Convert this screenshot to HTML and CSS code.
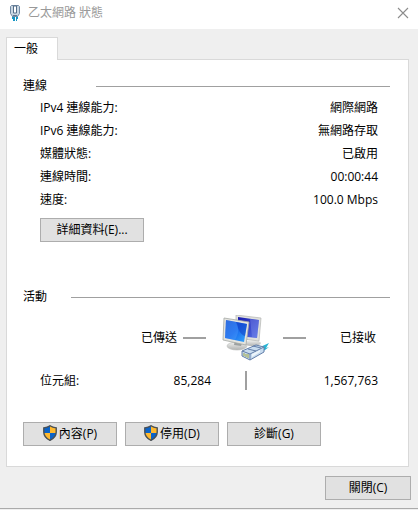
FILE: index.html
```
<!DOCTYPE html>
<html lang="zh-TW">
<head>
    <meta charset="UTF-8">
    <meta name="viewport" content="width=device-width, initial-scale=1.0">
    <title>乙太網路 狀態</title>
    <link rel="stylesheet" href="styles.css">
</head>
<body>
    <!-- Shared shield icon -->
    <svg class="symbols" aria-hidden="true">
        <symbol id="shield" viewBox="0 0 14 16">
            <path d="M7 .5C5 2 3 2.5.7 2.7V7c0 4 2.6 6.800 6.300 8.500Z" fill="#0b63c8"/>
            <path d="M7 .5C9 2 11 2.500 13.300 2.700V7c0 4-2.600 6.800-6.300 8.500Z" fill="#0b63c8"/>
            <path d="M7 .5C9 2 11 2.500 13.300 2.700V8H7Z" fill="#ffb92e"/>
            <path d="M.8 8H7v7.500C3.400 13.800 1.200 11.500.8 8Z" fill="#ffb92e"/>
            <path d="M7 .8C5 2.200 3 2.700.8 2.900V7c0 4 2.500 6.600 6.200 8.300 3.700-1.700 6.200-4.300 6.200-8.300V2.900C11 2.700 9 2.200 7 .8Z" fill="none" stroke="#4b5054" stroke-width="1.400"/>
        </symbol>
    </svg>

    <main class="dialog">
        <header class="titlebar">
            <svg class="plug-icon" viewBox="0 0 12 18" aria-hidden="true">
                <path d="M3 12h3v5H4v-2H3zM7 12h2v3H8v2H7z" fill="#1696c4"/>
                <path d="M2.500 1.500h7l1 1v7l-2 3h-5l-2-3v-7Z" fill="#c9d6e2" stroke="#7189a3"/>
                <path d="M4.500 2v7h3V2Z" fill="#fff" stroke="#566f89"/>
                <path d="M4 11.500h4" stroke="#5f7790"/>
            </svg>
            <h1>乙太網路 狀態</h1>
            <button class="close-icon" type="button" aria-label="關閉視窗">
                <svg viewBox="0 0 12 12" aria-hidden="true"><path d="M1 1l10 10M11 1L1 11" stroke="#8c8c8c" stroke-width="1.100"/></svg>
            </button>
        </header>

        <div class="content">
            <div class="tabs" role="tablist">
                <button class="tab" type="button" role="tab" aria-selected="true">一般</button>
            </div>

            <div class="panel" role="tabpanel">
                <!-- Connection -->
                <section class="connection">
                    <h2 class="connection-title">連線</h2>
                    <dl class="details">
                        <div class="row"><dt>IPv4 連線能力:</dt><dd>網際網路</dd></div>
                        <div class="row"><dt>IPv6 連線能力:</dt><dd>無網路存取</dd></div>
                        <div class="row"><dt>媒體狀態:</dt><dd>已啟用</dd></div>
                        <div class="row"><dt>連線時間:</dt><dd>00:00:44</dd></div>
                        <div class="row"><dt>速度:</dt><dd>100.0 Mbps</dd></div>
                    </dl>
                    <button class="btn btn-details" type="button">詳細資料(E)...</button>
                </section>

                <!-- Activity -->
                <section class="activity">
                    <h2 class="activity-title">活動</h2>
                    <div class="traffic">
                        <div class="sent">已傳送<span class="dash"></span></div>
                        <svg class="network-icon" viewBox="0 0 48 46" aria-hidden="true">
                            <defs>
                                <linearGradient id="screen" x1="0" y1="0" x2="1" y2="1">
                                    <stop offset="0" stop-color="#1a4fd0"/>
                                    <stop offset=".48" stop-color="#1767ed"/>
                                    <stop offset="1" stop-color="#37a9fb"/>
                                </linearGradient>
                                <linearGradient id="screen-back" x1="0" y1="0" x2="1" y2="1">
                                    <stop offset="0" stop-color="#1719ad"/>
                                    <stop offset="1" stop-color="#5874e5"/>
                                </linearGradient>
                                <linearGradient id="metal" x1="0" y1="0" x2="0" y2="1">
                                    <stop offset="0" stop-color="#f3f3f1"/>
                                    <stop offset="1" stop-color="#b0b2b1"/>
                                </linearGradient>
                            </defs>
                            <ellipse cx="30" cy="28" rx="9" ry="3" fill="url(#metal)"/>
                            <path d="M14 0l25 3-2 23-23-3Z" fill="#e0e1dd" stroke="#b3b5b3" stroke-width=".7"/>
                            <path d="M16 2l21 3-2 18-19-2Z" fill="url(#screen-back)"/>
                            <path d="M28 4l9 1-2 18-5-1Z" fill="#8291ee" opacity=".4"/>
                            <ellipse cx="15" cy="31" rx="10" ry="4" fill="url(#metal)" stroke="#b9bbb9" stroke-width=".6"/>
                            <path d="M13 25l8 1-2 5-7-1Z" fill="#9da1a1"/>
                            <path d="M2 3l25 4-3 23-23-5Z" fill="#e4e4df" stroke="#a5a8a5" stroke-width=".8"/>
                            <path d="M4 5l21 4-3 18-19-4Z" fill="url(#screen)"/>
                            <path d="M14 7l11 2-2 12c-4-1-7-6-9-14Z" fill="#0f39bf" opacity=".5"/>
                            <path d="M4 5l10 2c4 7 2 12-1 18L3 23Z" fill="#64afff" opacity=".3"/>
                            <path d="M36 33l11-5-3 5 3-1-8 6Z" fill="#28b4d3"/>
                            <path d="M20 36l14-6 8 2v5l-14 8-8-4Z" fill="#c8dcef" stroke="#647fa9"/>
                            <path d="M20 36l8 3 14-7M28 39v6M26 34l8 2M31 31l8 2" fill="none" stroke="#647fa9"/>
                            <path d="M22 38v3M24 39v3M26 39v4" stroke="#a0a742"/>
                            <path d="M30 39l8-4v2l-8 5Z" fill="#edf5fb"/>
                        </svg>
                        <div class="received"><span class="dash"></span>已接收</div>

                        <div class="bytes-sent"><span>位元組:</span><span>85,284</span></div>
                        <span class="divider"></span>
                        <div class="bytes-received">1,567,763</div>
                    </div>
                </section>

                <div class="actions">
                    <button class="btn" type="button"><svg class="shield"><use href="#shield"/></svg>內容(P)</button>
                    <button class="btn" type="button"><svg class="shield"><use href="#shield"/></svg>停用(D)</button>
                    <button class="btn" type="button">診斷(G)</button>
                </div>
            </div>

            <div class="footer">
                <button class="btn btn-close" type="button">關閉(C)</button>
            </div>
        </div>
    </main>
</body>
</html>
```
FILE: styles.css
```
* {
    box-sizing: border-box;
}
body {
    margin: 0;
    background-color: #efefef;
    color: #000;
    font-family: "Open Sans", "Noto Sans CJK TC", sans-serif;
    font-size: 12px;
    line-height: 16px;
}
button {
    font: inherit;
    color: inherit;
}
.symbols {
    display: none;
}
.dialog {
    border-bottom: 1px solid #aaa;
}
.titlebar {
    display: flex;
    align-items: center;
    height: 29px;
    padding: 0 8px 3px 9px;
    background-color: #fff;
}
.titlebar h1 {
    flex: 1;
    margin: 0 0 0 7px;
    color: #999;
    font-size: 12px;
    font-weight: normal;
}
.plug-icon {
    width: 12px;
    height: 18px;
}
.close-icon {
    display: flex;
    padding: 1px;
    border: none;
    background: none;
}
.close-icon svg {
    width: 12px;
    height: 12px;
}
.content {
    padding: 8px 9px 8px 6px;
}
.tabs {
    display: flex;
}
.tab {
    position: relative;
    z-index: 1;
    width: 52px;
    height: 23px;
    margin-bottom: -1px;
    padding: 0 10px 0 7px;
    border: 1px solid #d9d9d9;
    border-bottom: none;
    background-color: #fff;
    text-align: left;
}
.panel {
    padding: 18px 18px 20px 16px;
    border: 1px solid #d9d9d9;
    background-color: #fff;
}
h2 {
    display: flex;
    align-items: center;
    margin: 0;
    font-size: 12px;
    font-weight: normal;
}
h2::after {
    content: "";
    flex: 1;
    height: 1px;
    background-color: #a0a0a0;
}
.connection-title {
    gap: 49px;
}
.activity-title {
    gap: 24px;
}
.details {
    margin: 2px 12px 0 17px;
}
.row {
    display: flex;
    justify-content: space-between;
    line-height: 23px;
}
.row dd {
    margin: 0;
}
.btn {
    display: flex;
    align-items: center;
    justify-content: center;
    height: 24px;
    padding: 0;
    border: 1px solid #adadad;
    background-color: #e1e1e1;
}
.btn-details {
    width: 104px;
    margin: 7px 0 0 17px;
}
.activity {
    margin-top: 47px;
}
.traffic {
    display: grid;
    grid-template-columns: 1fr 70px 97px;
    align-items: center;
    row-gap: 10px;
    margin: 10px 12px 0 17px;
}
.sent,
.received {
    display: flex;
    align-items: center;
}
.sent {
    justify-content: flex-end;
    gap: 6px;
    padding-right: 5px;
}
.received {
    justify-content: space-between;
    padding-right: 2px;
    padding-left: 2px;
}
.dash {
    width: 23px;
    height: 2px;
    background-color: #a0a0a0;
}
.network-icon {
    justify-self: center;
    width: 48px;
    height: 46px;
}
.bytes-sent {
    display: flex;
    justify-content: space-between;
}
.bytes-received {
    text-align: right;
}
.divider {
    justify-self: center;
    width: 2px;
    height: 19px;
    background-color: #a0a0a0;
}
.actions {
    display: flex;
    gap: 8px;
    margin-top: 32px;
}
.actions .btn {
    width: 94px;
}
.shield {
    width: 14px;
    height: 16px;
    margin: 0 2px 2px 0;
}
.footer {
    display: flex;
    justify-content: flex-end;
    margin-top: 9px;
}
.btn-close {
    width: 86px;
    margin-right: -2px;
}
```
